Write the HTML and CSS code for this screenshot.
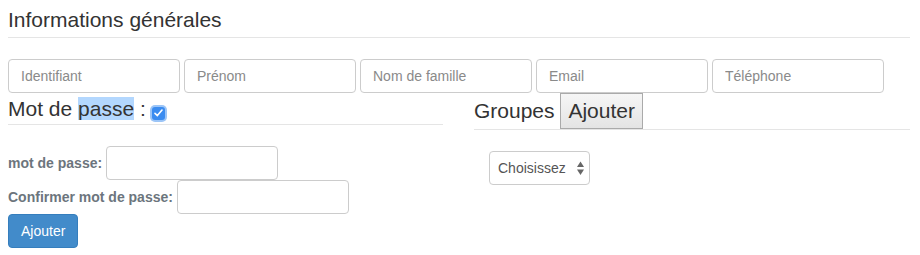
FILE: index.html
```html
<!DOCTYPE html>
<html lang="fr">
<head>
  <meta charset="UTF-8" />
  <title>Informations générales</title>
  <link rel="stylesheet" href="styles.css">
</head>
<body>
  <div class="page">
    <h2 class="page-title">Informations générales</h2>

    <div class="info-row">
      <input type="text" class="field" placeholder="Identifiant" />
      <input type="text" class="field" placeholder="Prénom" />
      <input type="text" class="field" placeholder="Nom de famille" />
      <input type="text" class="field" placeholder="Email" />
      <input type="text" class="field" placeholder="Téléphone" />
    </div>

    <div class="columns">
      <!-- mot de passe -->
      <div class="col">
        <h3 class="col-title pwd-title">Mot de <span class="selected">passe</span> : <span class="check"><svg width="9" height="8" viewBox="0 0 9 8"><path d="M1 4.3 L3.4 6.6 L8 1" fill="none" stroke="#fff" stroke-width="1.6" stroke-linecap="round" stroke-linejoin="round"/></svg></span></h3>

        <div class="pwd-form">
          <div class="pwd-row">
            <label class="pwd-label">mot de passe:</label> <input type="password" class="field small" />
          </div>
          <div class="pwd-row">
            <label class="pwd-label">Confirmer mot de passe:</label> <input type="password" class="field small" />
          </div>
          <button class="btn-primary">Ajouter</button>
        </div>
      </div>

      <!-- groupes -->
      <div class="col">
        <h3 class="col-title">Groupes <button class="btn-add">Ajouter</button></h3>

        <div class="select-wrap">
          <select class="group-select">
            <option>Choisissez</option>
          </select>
          <svg class="select-arrows" width="7" height="15" viewBox="0 0 7 15">
            <path d="M0 6 L3.5 0.5 L7 6 Z" fill="#666"/>
            <path d="M0 8.5 L7 8.5 L3.5 14 Z" fill="#666"/>
          </svg>
        </div>
      </div>
    </div>
  </div>
</body>
</html>
```

FILE: styles.css
```css
* {
  box-sizing: border-box;
}
body {
  margin: 8px;
  font-family: "Liberation Sans", Arial, sans-serif;
  font-size: 14px;
  color: #333;
  background: #fff;
}
.page {
  width: 902px;
}
.page-title {
  margin: 0;
  font-size: 21px;
  font-weight: normal;
  line-height: normal;
  padding-bottom: 5px;
  border-bottom: 1px solid #e5e5e5;
}
.info-row {
  display: flex;
  gap: 4px;
  margin-top: 21px;
}
.field {
  width: 172px;
  height: 34px;
  padding: 6px 12px;
  font-family: inherit;
  font-size: 14px;
  line-height: 20px;
  color: #555;
  background: #fff;
  border: 1px solid #ccc;
  border-radius: 4px;
  margin: 0;
}
.field::placeholder {
  color: #8a8a8a;
}
.columns {
  display: grid;
  grid-template-columns: 435px 436px;
  column-gap: 31px;
}
.col-title {
  margin: 0;
  font-size: 21px;
  font-weight: normal;
  line-height: normal;
  border-bottom: 1px solid #e5e5e5;
}
.pwd-title {
  padding: 4px 0 3px;
}
.selected {
  background: #b3d7fe;
}
.check {
  display: inline-flex;
  align-items: center;
  justify-content: center;
  width: 13px;
  height: 13px;
  border-radius: 3px;
  background: #3b8cf0;
  box-shadow: 0 0 0 2px #9cc5f7;
  vertical-align: -1px;
}
.pwd-form {
  margin-top: 21px;
}
.pwd-row {
  height: 34px;
  line-height: 20px;
}
.pwd-label {
  font-weight: bold;
  color: #6c757d;
}
.btn-primary {
  height: 34px;
  padding: 6px 12px;
  font-family: inherit;
  font-size: 14px;
  line-height: 20px;
  color: #fff;
  background: #428bca;
  border: 1px solid #357ebd;
  border-radius: 4px;
  cursor: pointer;
}
.btn-add {
  font-family: inherit;
  font-size: 21px;
  line-height: normal;
  color: #333;
  padding: 5px 7px;
  margin: 0;
  background: linear-gradient(#f6f6f6, #e4e4e4);
  border: 1px solid #aaa;
  border-radius: 0;
}
.select-wrap {
  position: relative;
  width: 101px;
  margin: 21px 0 0 15px;
}
.group-select {
  appearance: none;
  -webkit-appearance: none;
  width: 101px;
  height: 34px;
  padding: 0 0 0 8px;
  font-family: inherit;
  font-size: 14px;
  color: #555;
  background: #fff;
  border: 1px solid #ccc;
  border-radius: 4px;
}
.select-arrows {
  position: absolute;
  left: 88px;
  top: 10px;
  pointer-events: none;
}
```
